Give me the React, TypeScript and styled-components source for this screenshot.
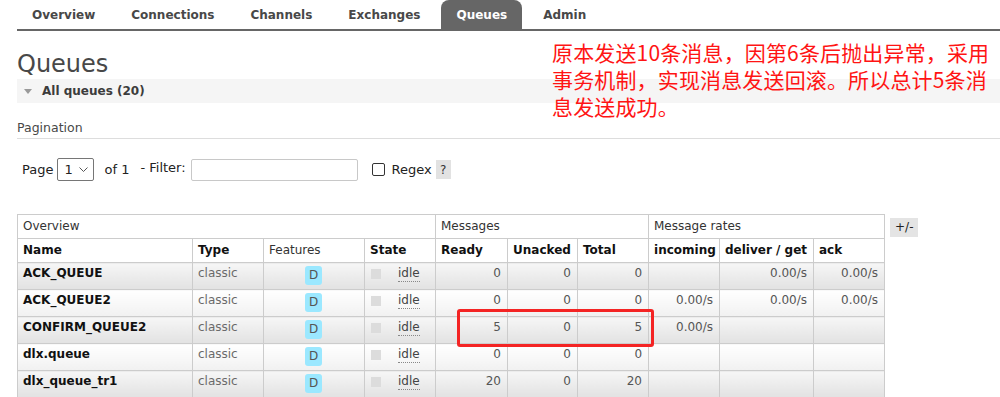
import React from "react";
import styled, { createGlobalStyle } from "styled-components";

const GlobalStyle = createGlobalStyle`
  html, body {
    margin: 0;
    padding: 0;
    background: #fff;
    overflow: hidden;
  }
  body {
    font-family: "DejaVu Sans", Verdana, sans-serif;
    font-size: 12px;
    color: #484848;
  }
`;

const Page = styled.div`
  position: relative;
  width: 1000px;
  height: 397px;
  overflow: hidden;
`;

const Menu = styled.ul`
  display: flex;
  gap: 6px;
  list-style: none;
  margin: 0 0 0 17px;
  padding: 0;
  height: 29px;
  border-bottom: 2px solid #666;
`;

const MenuItem = styled.li<{ $active?: boolean }>`
  box-sizing: border-box;
  height: 29px;
  padding: 8px 15px 0;
  line-height: 14px;
  font-weight: bold;
  color: ${(p) => (p.$active ? "#fff" : "#484848")};
  background: ${(p) => (p.$active ? "#666" : "transparent")};
  border-radius: 8px 8px 0 0;
`;

const Main = styled.div`
  padding-left: 17px;
`;

const Title = styled.h1`
  margin: 19px 0 1px;
  font-size: 24px;
  line-height: 28px;
  font-weight: normal;
  color: #484848;
`;

const SectionBar = styled.div`
  display: flex;
  align-items: center;
  height: 24px;
  padding-left: 7px;
  background: #f5f5f5;
  font-weight: bold;
  color: #3c3c3c;
`;

const Triangle = styled.span`
  width: 0;
  height: 0;
  margin-right: 10px;
  border-left: 4.5px solid transparent;
  border-right: 4.5px solid transparent;
  border-top: 5px solid #999;
`;

const SubHeading = styled.h3`
  margin: 17px 0 0;
  padding-bottom: 3px;
  font-size: 12.5px;
  line-height: 15px;
  font-weight: normal;
  color: #484848;
  border-bottom: 1px solid #ddd;
`;

const Controls = styled.div`
  display: flex;
  align-items: center;
  height: 23px;
  margin-top: 19px;
  padding-left: 5px;
  font-size: 13px;
  color: #222;
`;

const Label = styled.span<{ $gap?: number; $lift?: number }>`
  margin-right: ${(p) => p.$gap ?? 4}px;
  position: relative;
  top: ${(p) => -(p.$lift ?? 0)}px;
`;

const FakeSelect = styled.div`
  box-sizing: border-box;
  display: flex;
  align-items: center;
  justify-content: space-between;
  width: 37px;
  height: 23px;
  padding: 0 5px 0 6px;
  margin-right: 10px;
  border: 1px solid #767676;
  border-radius: 2px;
  background: #fff;
`;

const FilterInput = styled.input`
  box-sizing: border-box;
  width: 167px;
  height: 22px;
  margin: 0 14px 0 0;
  border: 1px solid #c8c8c8;
  border-radius: 2px;
  outline: none;
`;

const CheckBox = styled.span`
  box-sizing: border-box;
  width: 13px;
  height: 13px;
  margin-right: 7px;
  border: 1px solid #333;
  border-radius: 2px;
  background: #fff;
`;

const HelpBox = styled.span`
  display: inline-flex;
  align-items: center;
  justify-content: center;
  width: 15px;
  height: 19px;
  margin-left: 4px;
  background: #e2e2e2;
  color: #333;
  font-size: 12px;
`;

const TableRow = styled.div`
  display: flex;
  align-items: flex-start;
  gap: 5px;
  margin-top: 33px;
`;

const Table = styled.table`
  border-collapse: collapse;
  table-layout: fixed;
  width: 868px;
  border: 1px solid #ccc;
`;

const HeadCell = styled.th<{ $bold?: boolean }>`
  box-sizing: border-box;
  height: 24px;
  padding: 4px 5px 3px;
  text-align: left;
  vertical-align: top;
  line-height: 15px;
  border: 1px solid #ccc;
  font-weight: ${(p) => (p.$bold ? "bold" : "normal")};
  color: ${(p) => (p.$bold ? "#111" : "#333")};
  background: #fff;
  white-space: nowrap;
`;

const BodyRow = styled.tr<{ $alt: boolean }>`
  td {
    background: ${(p) =>
      p.$alt
        ? "linear-gradient(#f6f6f6, #e2e2e2)"
        : "linear-gradient(#ffffff, #f1f1f1)"};
  }
`;

const Cell = styled.td<{ $kind?: "name" | "muted" | "num" | "center" }>`
  box-sizing: border-box;
  height: 27px;
  padding: 3px 6px 0 5px;
  vertical-align: top;
  line-height: 15px;
  border: 1px solid #ccc;
  white-space: nowrap;
  text-align: ${(p) => (p.$kind === "num" ? "right" : p.$kind === "center" ? "center" : "left")};
  font-weight: ${(p) => (p.$kind === "name" ? "bold" : "normal")};
  color: ${(p) => (p.$kind === "name" ? "#111" : p.$kind === "muted" ? "#6a6a6a" : "#555")};
`;

const Badge = styled.span`
  display: inline-block;
  width: 17px;
  height: 19px;
  line-height: 19px;
  border-radius: 3px;
  background: #9be8ff;
  color: #555;
  text-align: center;
`;

const StateWrap = styled.div`
  display: flex;
  align-items: flex-start;
`;

const StateDot = styled.span`
  width: 10px;
  height: 10px;
  margin: 3px 17px 0 1px;
  background: #dcdcdc;
`;

const StateText = styled.abbr`
  color: #444;
  text-decoration: none;
  border-bottom: 1px dotted #888;
  line-height: 15px;
`;

const ToggleButton = styled.span`
  margin-top: 4px;
  padding: 2px 5px;
  height: 15px;
  line-height: 15px;
  background: #e4e4e4;
  color: #222;
`;

const Note = styled.div`
  position: absolute;
  left: 552px;
  top: 39px;
  font-family: "Noto Sans CJK SC", "Microsoft YaHei", sans-serif;
  font-size: 21px;
  line-height: 27px;
  letter-spacing: 0.15px;
  color: #ff1414;
  white-space: nowrap;
`;

const Highlight = styled.div`
  position: absolute;
  left: 457px;
  top: 309px;
  width: 197px;
  height: 38px;
  box-sizing: border-box;
  border: 3px solid #f42424;
  border-radius: 3px;
`;

const tabs = ["Overview", "Connections", "Channels", "Exchanges", "Queues", "Admin"];

const columns = [175, 71, 101, 71, 72, 70, 71, 71, 94, 71];

const queues = [
  { name: "ACK_QUEUE", ready: "0", unacked: "0", total: "0", incoming: "", deliver: "0.00/s", ack: "0.00/s" },
  { name: "ACK_QUEUE2", ready: "0", unacked: "0", total: "0", incoming: "0.00/s", deliver: "0.00/s", ack: "0.00/s" },
  { name: "CONFIRM_QUEUE2", ready: "5", unacked: "0", total: "5", incoming: "0.00/s", deliver: "", ack: "" },
  { name: "dlx.queue", ready: "0", unacked: "0", total: "0", incoming: "", deliver: "", ack: "" },
  { name: "dlx_queue_tr1", ready: "20", unacked: "0", total: "20", incoming: "", deliver: "", ack: "" },
];

export default function App() {
  return (
    <Page>
      <GlobalStyle />
      <Menu>
        {tabs.map((t) => (
          <MenuItem key={t} $active={t === "Queues"}>
            {t}
          </MenuItem>
        ))}
      </Menu>
      <Main>
        <Title>Queues</Title>
        <SectionBar>
          <Triangle />
          All queues (20)
        </SectionBar>
        <SubHeading>Pagination</SubHeading>
        <Controls>
          <Label>Page</Label>
          <FakeSelect>
            <span>1</span>
            <svg width="9" height="5" viewBox="0 0 9 5">
              <path d="M0.5 0.5 L4.5 4.5 L8.5 0.5" fill="none" stroke="#555" strokeWidth="1" />
            </svg>
          </FakeSelect>
          <Label $gap={11}>of 1</Label>
          <Label $gap={5} $lift={2}>- Filter:</Label>
          <FilterInput type="text" />
          <CheckBox />
          <Label $gap={0}>Regex</Label>
          <HelpBox>?</HelpBox>
        </Controls>
        <TableRow>
          <Table>
            <colgroup>
              {columns.map((w, i) => (
                <col key={i} style={{ width: w }} />
              ))}
            </colgroup>
            <thead>
              <tr>
                <HeadCell colSpan={4}>Overview</HeadCell>
                <HeadCell colSpan={3}>Messages</HeadCell>
                <HeadCell colSpan={3}>Message rates</HeadCell>
              </tr>
              <tr>
                <HeadCell $bold>Name</HeadCell>
                <HeadCell $bold>Type</HeadCell>
                <HeadCell>Features</HeadCell>
                <HeadCell $bold>State</HeadCell>
                <HeadCell $bold>Ready</HeadCell>
                <HeadCell $bold>Unacked</HeadCell>
                <HeadCell $bold>Total</HeadCell>
                <HeadCell $bold>incoming</HeadCell>
                <HeadCell $bold>deliver / get</HeadCell>
                <HeadCell $bold>ack</HeadCell>
              </tr>
            </thead>
            <tbody>
              {queues.map((q, i) => (
                <BodyRow key={q.name} $alt={i % 2 === 0}>
                  <Cell $kind="name">{q.name}</Cell>
                  <Cell $kind="muted">classic</Cell>
                  <Cell $kind="center">
                    <Badge>D</Badge>
                  </Cell>
                  <Cell>
                    <StateWrap>
                      <StateDot />
                      <StateText>idle</StateText>
                    </StateWrap>
                  </Cell>
                  <Cell $kind="num">{q.ready}</Cell>
                  <Cell $kind="num">{q.unacked}</Cell>
                  <Cell $kind="num">{q.total}</Cell>
                  <Cell $kind="num">{q.incoming}</Cell>
                  <Cell $kind="num">{q.deliver}</Cell>
                  <Cell $kind="num">{q.ack}</Cell>
                </BodyRow>
              ))}
            </tbody>
          </Table>
          <ToggleButton>+/-</ToggleButton>
        </TableRow>
      </Main>
      <Note>
        原本发送10条消息，因第6条后抛出异常，采用
        <br />
        事务机制，实现消息发送回滚。所以总计5条消
        <br />
        息发送成功。
      </Note>
      <Highlight />
    </Page>
  );
}
